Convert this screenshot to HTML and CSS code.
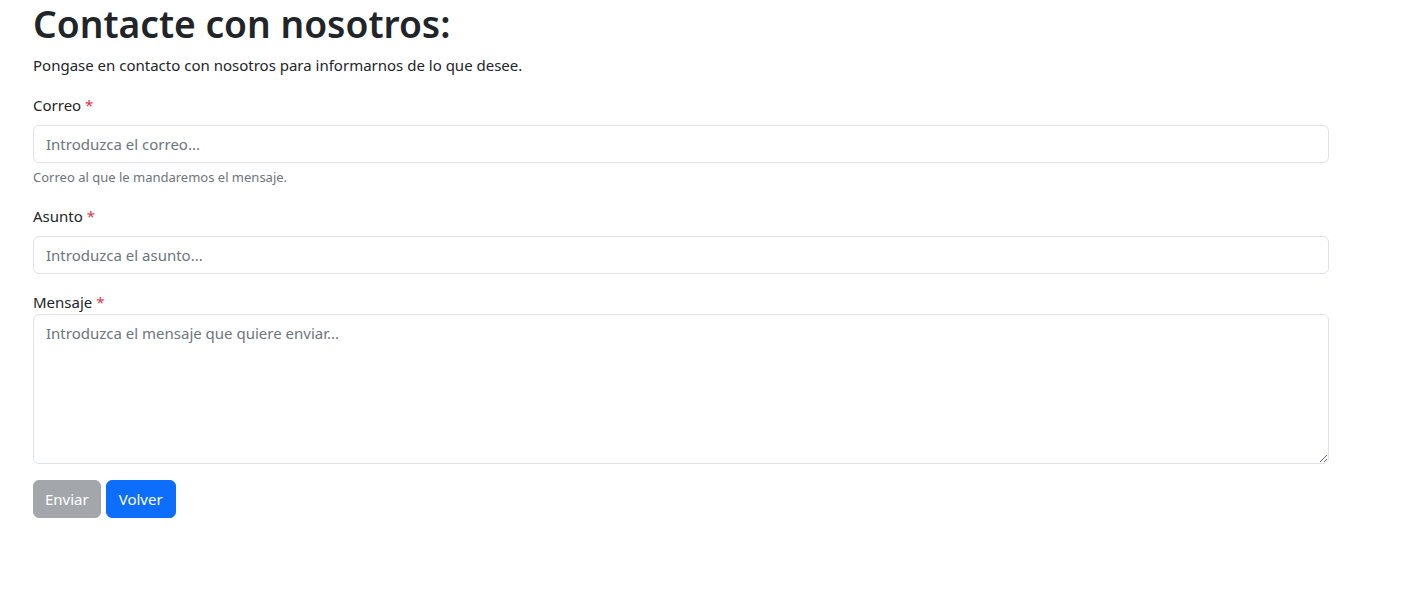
FILE: index.html
```html
<!DOCTYPE html>
<html lang="es">
<head>
<meta charset="utf-8">
<title>Contacto</title>
<link rel="stylesheet" href="styles.css">
</head>
<body>
<main class="page">
  <h1 class="title">Contacte con nosotros:</h1>
  <p class="lead">Pongase en contacto con nosotros para informarnos de lo que desee.</p>
  <form class="form">
    <div class="field">
      <label class="label" for="correo">Correo <span class="req">*</span></label>
      <input class="control" id="correo" type="email" placeholder="Introduzca el correo...">
      <div class="help">Correo al que le mandaremos el mensaje.</div>
    </div>
    <div class="field">
      <label class="label" for="asunto">Asunto <span class="req">*</span></label>
      <input class="control" id="asunto" type="text" placeholder="Introduzca el asunto...">
    </div>
    <div class="field">
      <label class="label label-tight" for="mensaje">Mensaje <span class="req">*</span></label>
      <textarea class="control area" id="mensaje" placeholder="Introduzca el mensaje que quiere enviar..."></textarea>
    </div>
    <div class="actions">
      <button class="btn btn-gray" type="submit" disabled>Enviar</button>
      <button class="btn btn-blue" type="button">Volver</button>
    </div>
  </form>
</main>
</body>
</html>
```
FILE: styles.css
```css
* { box-sizing: border-box; }
html, body { margin: 0; padding: 0; background: #fff; }
body {
  font-family: "Noto Sans", "Open Sans", sans-serif;
  font-size: 15px;
  line-height: 24px;
  color: #212529;
}
.page {
  width: 1296px;
  margin-left: 33px;
}
.title {
  margin: 0 0 5px;
  font-size: 37.2px;
  font-weight: 600;
  line-height: 48px;
}
.lead { margin: 0 0 16px; }
.form { margin: 0; }
.field { margin-bottom: 16px; }
.label { display: inline-block; margin-bottom: 8px; }
.label-tight { margin-bottom: 0; display: block; }
.req { color: #dc3545; }
.control {
  display: block;
  width: 100%;
  height: 38px;
  padding: 6px 12px;
  font: inherit;
  color: #212529;
  background: #fff;
  border: 1px solid #dee2e6;
  border-radius: 6px;
}
.control::placeholder { color: #6c757d; opacity: 1; }
.area { height: 150px; resize: vertical; }
.help { margin-top: 4px; font-size: 13px; color: #6c757d; line-height: 21px; }
.actions { display: flex; gap: 5px; }
.btn {
  height: 38px;
  padding: 6px 12px;
  font: inherit;
  border: 1px solid transparent;
  border-radius: 6px;
  color: #fff;
  cursor: pointer;
}
.btn-gray { background: #a3a7ac; border-color: #a3a7ac; padding: 6px 11px; }
.btn-blue { background: #0d6efd; border-color: #0d6efd; }
```
